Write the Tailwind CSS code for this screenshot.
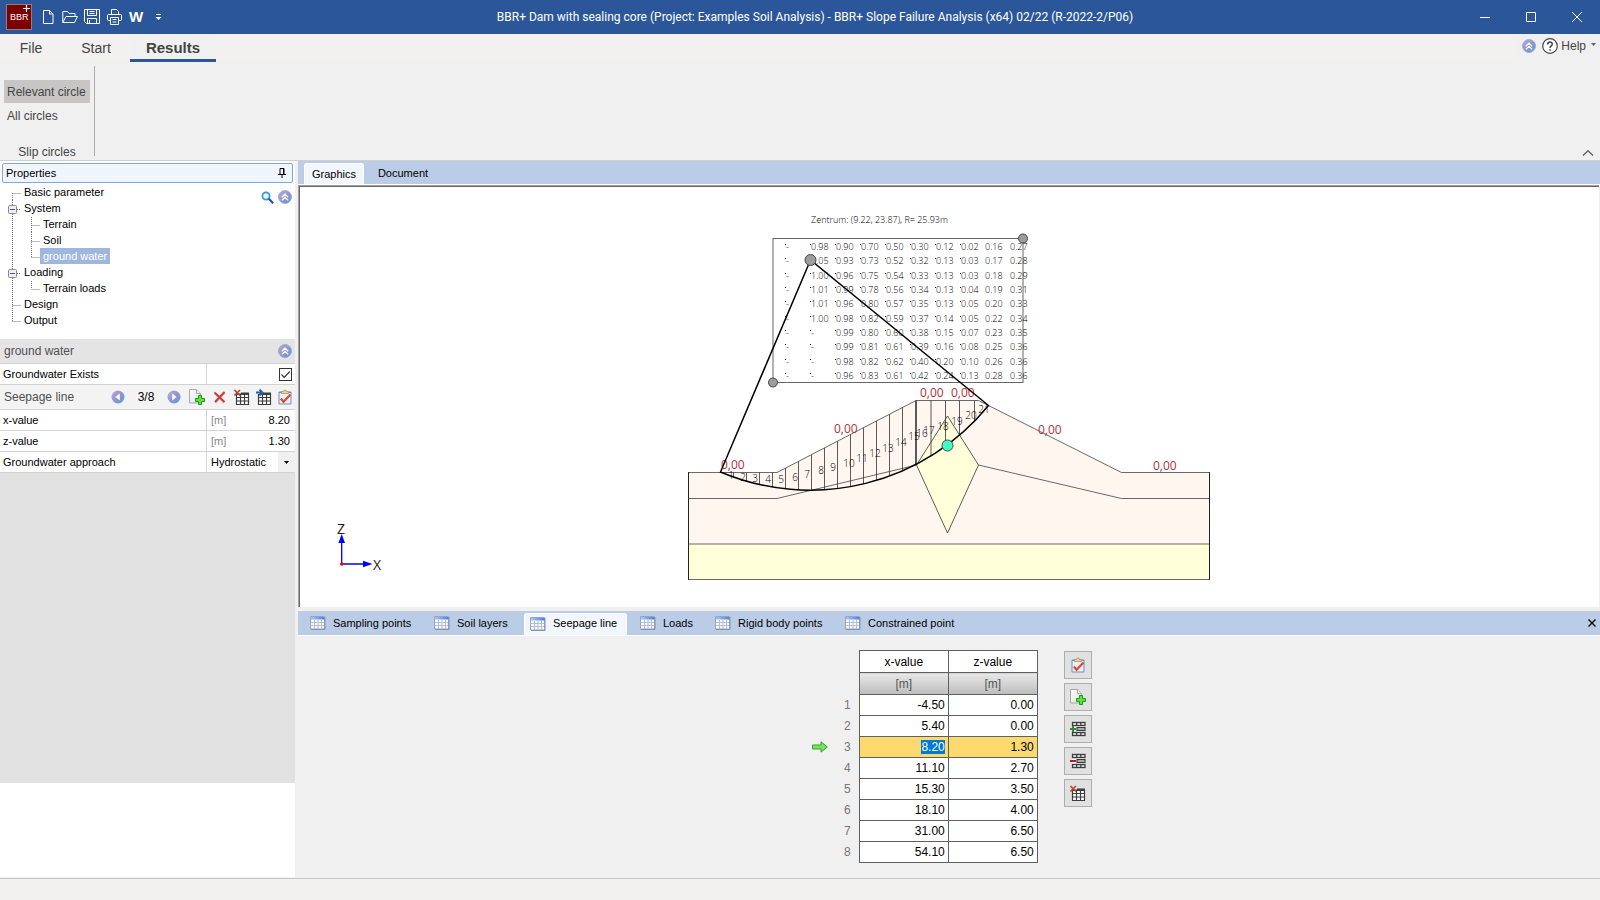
<!DOCTYPE html>
<html lang="en">
<head>
    <meta charset="UTF-8">
    <meta name="viewport" content="width=device-width, initial-scale=1.0">
    <title>BBR+ Slope Failure Analysis</title>
    <script src="https://cdn.jsdelivr.net/npm/@tailwindcss/browser@4"></script>
</head>
<body class="h-screen flex flex-col overflow-hidden bg-[#f0f0f0] font-['Liberation_Sans',sans-serif] text-[11px] text-black">

    <!-- shared icons -->
    <svg class="absolute w-0 h-0">
        <defs>
            <linearGradient id="ball" x1="0" y1="0" x2="1" y2="1">
                <stop offset="0" stop-color="#b7aede"/>
                <stop offset="0.5" stop-color="#9296cf"/>
                <stop offset="1" stop-color="#5a9ad6"/>
            </linearGradient>
            <linearGradient id="tabhead" x1="0" y1="0" x2="1" y2="0">
                <stop offset="0" stop-color="#a9c5fb"/>
                <stop offset="1" stop-color="#4a7ee0"/>
            </linearGradient>
            <linearGradient id="page" x1="0" y1="0" x2="1" y2="1">
                <stop offset="0" stop-color="#ffffff"/>
                <stop offset="1" stop-color="#dcdcdc"/>
            </linearGradient>
        </defs>
        <symbol id="collapse" viewBox="0 0 14 14">
            <circle cx="7" cy="7" r="6.5" fill="url(#ball)" stroke="#8fa6d8" stroke-width="0.8"/>
            <path d="M3.8 7.2 7 4.2l3.2 3M3.8 10.4 7 7.4l3.2 3" fill="none" stroke="#fff" stroke-width="1.3"/>
        </symbol>
        <symbol id="prev" viewBox="0 0 14 14">
            <circle cx="7" cy="7" r="6.5" fill="url(#ball)"/>
            <path d="M8.8 3.4v7.2L4.4 7z" fill="#fff"/>
        </symbol>
        <symbol id="next" viewBox="0 0 14 14">
            <circle cx="7" cy="7" r="6.5" fill="url(#ball)"/>
            <path d="M5.2 3.4v7.2L9.6 7z" fill="#fff"/>
        </symbol>
        <symbol id="newpage" viewBox="0 0 16 16">
            <path d="M.5 .5h7l4 4v9.500H.5z" fill="url(#page)" stroke="#a8a8a8"/>
            <path d="M7.5 .5v4h4" fill="#eee" stroke="#a8a8a8"/>
            <path d="M9.5 6.5h3v3h3v3h-3v3h-3v-3h-3v-3h3z" fill="#5fe03a" stroke="#1a9a1a"/>
        </symbol>
        <symbol id="cross" viewBox="0 0 16 16">
            <path d="M3 4.5 12 14M13 3.500 3.500 14" stroke="#ccc" stroke-width="2"/>
            <path d="M2.500 3.500 12.500 13M12.500 3 3 13" stroke="#cf3b3b" stroke-width="2"/>
        </symbol>
        <symbol id="grid" viewBox="0 0 16 16">
            <path d="M2 4.500h13v11H2z" fill="#fff"/>
            <path d="M2.500 5v10.500h12V5M6.500 5v10.500M10.500 5v10.500M2.500 8.500h12M2.500 12h12" fill="none" stroke="#3d3d3d" stroke-width="1.200"/>
            <path d="M7 3.500h8v2.500H3v-1.500h4z" fill="#3d3d3d"/>
        </symbol>
        <symbol id="delgrid" viewBox="0 0 16 16">
            <use href="#grid"/>
            <path d="M.5 1 6 6.500M6 1 .5 6.500" stroke="#b8432f" stroke-width="1.600"/>
        </symbol>
        <symbol id="insgrid" viewBox="0 0 16 16">
            <use href="#grid"/>
            <path d="M0 3.500h5M3.500 .5 6.500 3.500l-3 3" fill="none" stroke="#1c5fa8" stroke-width="1.800"/>
        </symbol>
        <symbol id="paste" viewBox="0 0 16 16">
            <rect x="1.500" y="2.500" width="13" height="13" rx="1" fill="#6f8fc4"/>
            <path d="M2.500 4h11v10.500h-11z" fill="#e8effa"/>
            <path d="M4.500 4.500V2.500h2a1.500 1.500 0 0 1 3 0h2v2z" fill="#e3d3a0" stroke="#a8935a" stroke-width="0.800"/>
            <path d="M3.800 9.500 6.500 12.800 13.500 5.500" fill="none" stroke="#e0492a" stroke-width="2.200"/>
        </symbol>
        <symbol id="rows" viewBox="0 0 16 16">
            <path d="M2 .5h13.500v15H2z" fill="#fff"/>
            <path d="M2.500 1.500h12.500v3H2.500zM6.700 1.500v3M10.800 1.500v3M2.500 11.500h12.500v3H2.500zM6.700 11.500v3M10.800 11.500v3" fill="none" stroke="#3d3d3d" stroke-width="1.300"/>
            <path d="M7 6.500h8v3H7z" fill="#aaa" stroke="#3d3d3d" stroke-width="1.200"/>
        </symbol>
        <symbol id="addrow" viewBox="0 0 16 16">
            <use href="#rows"/>
            <path d="M0 8h6M3 5v6" stroke="#2f8a3a" stroke-width="2"/>
        </symbol>
        <symbol id="delrow" viewBox="0 0 16 16">
            <use href="#rows"/>
            <path d="M0 8h6" stroke="#c4141e" stroke-width="2"/>
        </symbol>
        <symbol id="sheet" viewBox="0 0 16 14">
            <path d="M.5.5h14v12.500H.5z" fill="#f6f8fc" stroke="#98a5bd"/>
            <path d="M1 3.500V1h13.500v2.500z" fill="url(#tabhead)"/>
            <path d="M1 6.500h13M1 9.500h13M4.500 4v9M8 4v9M11.500 4v9" stroke="#b5bfd2"/>
            <path d="M15 1v12.500H1" fill="none" stroke="#8492ac"/>
        </symbol>
    </svg>

    <!-- title bar -->
    <header class="h-[34px] shrink-0 bg-[#2b579a] text-white flex items-center">
        <div class="flex items-center pl-[6px] flex-1">
            <svg class="w-[26px] h-[26px]" viewBox="0 0 26 26">
                <rect x="0.500" y="0.500" width="25" height="25" fill="#7d0000" stroke="#8f8080"/>
                <text x="4" y="16" font-size="9" fill="#fff">BBR</text>
                <path d="M17 4.500h7M20.500 1v7" stroke="#fff" stroke-width="1.200"/>
            </svg>
            <button class="ml-[10px]" aria-label="New"><svg class="w-3 h-4" viewBox="0 0 12 16"><path d="M1.500 1.500h6l3.500 3.500v9.500H1.500zM7.500 1.500V5H11" fill="none" stroke="#fff"/></svg></button>
            <button class="ml-[8px]" aria-label="Open"><svg class="w-4 h-4" viewBox="0 0 16 16"><path d="M.8 13.500V2.500h4.700l1.500 2h6v3M.8 13.500 4 7.500h11.500l-3 6z" fill="none" stroke="#fff"/></svg></button>
            <button class="ml-[6px]" aria-label="Save"><svg class="w-4 h-4" viewBox="0 0 16 16"><path d="M.5.5h15v14h-13l-2-2zM3.500.5v6h9v-6M3.500 14.500v-5h9v5M5.500 2.500h5M5.500 4.500h5M5.500 11v3" fill="none" stroke="#fff"/></svg></button>
            <button class="ml-[7px]" aria-label="Print"><svg class="w-4 h-4" viewBox="0 0 16 16"><path d="M4.500 5.500v-5h5l2 2v3M3.500 11.500h-2a1 1 0 0 1-1-1v-4a1 1 0 0 1 1-1h12a1 1 0 0 1 1 1v4a1 1 0 0 1-1 1h-2M3.500 8.500h8v7h-8zM5.500 10.500h4M5.500 13h4" fill="none" stroke="#fff"/></svg></button>
            <button class="ml-[6px] w-[14px] font-bold text-[15px] leading-4" aria-label="Word">W</button>
            <button class="ml-[12px]" aria-label="Customize"><svg class="w-[7px] h-2" viewBox="0 0 7 8"><path d="M1 1.500h5" stroke="#fff"/><path d="M.5 4h6l-3 3z" fill="#fff"/></svg></button>
        </div>
        <h1 class="ml-6 font-['Roboto',sans-serif] text-[12px]">BBR+ Dam with sealing core (Project: Examples Soil Analysis) - BBR+ Slope Failure Analysis (x64) 02/22 (R-2022-2/P06)</h1>
        <div class="flex-1 flex justify-end">
            <button class="w-[46px] flex justify-center" aria-label="Minimize"><svg class="w-[10px] h-[10px]" viewBox="0 0 10 10"><path d="M0 5.500h10" stroke="#fff"/></svg></button>
            <button class="w-[46px] flex justify-center" aria-label="Maximize"><svg class="w-[10px] h-[10px]" viewBox="0 0 10 10"><path d="M.5.5h9v9h-9z" fill="none" stroke="#fff"/></svg></button>
            <button class="w-[46px] flex justify-center" aria-label="Close"><svg class="w-[10px] h-[10px]" viewBox="0 0 10 10"><path d="m0 0 10 10M10 0 0 10" stroke="#fff"/></svg></button>
        </div>
    </header>

    <!-- ribbon -->
    <nav class="h-7 shrink-0 bg-[#f3f1ef] flex text-[14px] text-[#444]">
        <button class="w-[62px]">File</button>
        <button class="w-[68px]">Start</button>
        <button class="w-[86px] bg-[#f0f0f0] border-b-3 border-[#2b579a] pt-[3px] font-bold text-[15px] leading-5">Results</button>
        <div class="ml-auto bg-[#f0f0f0] flex items-center gap-[6px] px-1 pb-1 text-[12px]">
            <button aria-label="Collapse"><svg class="w-[14px] h-[14px]"><use href="#collapse"/></svg></button>
            <button class="flex items-center gap-[3px]">
                <svg class="w-4 h-4" viewBox="0 0 16 16"><circle cx="8" cy="8" r="7.300" fill="#fff" stroke="#444" stroke-width="1.200"/><path d="M5.700 6.500C5.700 3.200 10.500 3.400 10.300 6.300 10.200 7.800 8 8 8 10M8 11.200v1.600" fill="none" stroke="#444" stroke-width="1.500"/></svg>
                Help
                <svg class="w-[5px] h-[3px] ml-[2px] mb-[3px]" viewBox="0 0 5 3"><path d="M0 0h5L2.500 3z" fill="#666"/></svg>
            </button>
        </div>
    </nav>
    <div class="h-[99px] shrink-0 border-b border-[#d2d0ce] flex text-[12px] text-[#444]">
        <section class="w-[95px] mt-1 mb-1 border-r border-[#ababab] pt-[14px] flex flex-col">
            <button class="ml-1 w-[86px] h-[23px] bg-[#c8c6c4] pl-[3px] text-left whitespace-nowrap">Relevant circle</button>
            <button class="ml-1 w-[86px] h-[26px] pl-[3px] text-left">All circles</button>
            <p class="mt-auto text-center leading-4 -mb-1">Slip circles</p>
        </section>
        <button class="ml-auto mt-auto mr-[6px] mb-[4px]" aria-label="Hide ribbon"><svg class="w-3 h-[6px]" viewBox="0 0 12 6"><path d="M1 5.500 6 .8l5 4.700" fill="none" stroke="#555" stroke-width="1.200"/></svg></button>
    </div>

    <main class="flex-1 min-h-0 flex">
        <!-- left panel -->
        <aside class="w-[295px] mr-[3px] shrink-0 bg-white flex flex-col">
            <h2 class="m-[2px] mb-0 h-5 shrink-0 bg-[#eff6ff] border border-[#7fa7e0] rounded-xs flex items-center justify-between pl-[3px] pr-[6px]">
                Properties
                <svg class="w-[8px] h-[10px]" viewBox="0 0 8 10"><path d="M2 6V.5h4V6M0 6.500h8M4 6.500V10M5.500.5V6" fill="none" stroke="#000"/></svg>
            </h2>
            <div class="h-[156px] shrink-0 flex items-start justify-between pt-[1px]">
                <ul class="leading-4">
                    <li class="flex"><svg class="w-6 h-4"><path d="M12.500 9v7M12.500 9.500H21" stroke="#777" stroke-dasharray="1 1"/></svg>Basic parameter</li>
                    <li>
                        <div class="flex"><button class="w-6 h-4" aria-label="Toggle System"><svg class="w-6 h-4"><path d="M12.500 0v16M17 9.500h4" stroke="#777" stroke-dasharray="1 1"/><rect x="8.500" y="5.500" width="8" height="8" rx="1" fill="#eee" stroke="#8a8a8a"/><path d="M10 9.500h5" stroke="#3a56a0"/></svg></button>System</div>
                        <ul>
                            <li class="flex"><svg class="w-[43px] h-4"><path d="M12.500 0v16M31.500 1v15M31.500 9.500H40" stroke="#777" stroke-dasharray="1 1"/></svg>Terrain</li>
                            <li class="flex"><svg class="w-[43px] h-4"><path d="M12.500 0v16M31.500 0v16M31.500 9.500H40" stroke="#777" stroke-dasharray="1 1"/></svg>Soil</li>
                            <li class="flex"><svg class="w-10 h-4"><path d="M12.500 0v16M31.500 0v9M31.500 9.500H40" stroke="#777" stroke-dasharray="1 1"/></svg><span class="bg-[#9fb6df] text-white px-[3px]">ground water</span></li>
                        </ul>
                    </li>
                    <li>
                        <div class="flex"><button class="w-6 h-4" aria-label="Toggle Loading"><svg class="w-6 h-4"><path d="M12.500 0v16M17 9.500h4" stroke="#777" stroke-dasharray="1 1"/><rect x="8.500" y="5.500" width="8" height="8" rx="1" fill="#eee" stroke="#8a8a8a"/><path d="M10 9.500h5" stroke="#3a56a0"/></svg></button>Loading</div>
                        <ul>
                            <li class="flex"><svg class="w-[43px] h-4"><path d="M12.500 0v16M31.500 1v8M31.500 9.500H40" stroke="#777" stroke-dasharray="1 1"/></svg>Terrain loads</li>
                        </ul>
                    </li>
                    <li class="flex"><svg class="w-6 h-4"><path d="M12.500 0v16M12.500 9.500H21" stroke="#777" stroke-dasharray="1 1"/></svg>Design</li>
                    <li class="flex"><svg class="w-6 h-4"><path d="M12.500 0v9M12.500 9.500H21" stroke="#777" stroke-dasharray="1 1"/></svg>Output</li>
                </ul>
                <div class="flex gap-1 pt-[6px] pr-[3px]">
                    <button aria-label="Search"><svg class="w-[13px] h-[13px]" viewBox="0 0 13 13"><circle cx="5" cy="5" r="3.600" fill="#e6f6ff" stroke="#3795d0" stroke-width="1.700"/><path d="m7.800 7.800 4.400 4.400" stroke="#234f9e" stroke-width="2.200"/></svg></button>
                    <button aria-label="Collapse all"><svg class="w-[14px] h-[14px]"><use href="#collapse"/></svg></button>
                </div>
            </div>

            <div class="h-[444px] shrink-0 bg-[#e1e1e1]">
                <h3 class="h-[25px] bg-[#e4e4e4] border-b border-[#d2d2d2] flex items-center justify-between pl-1 pr-[3px] text-[12px] text-[#505050]">
                    ground water
                    <button aria-label="Collapse section"><svg class="w-[14px] h-[14px]"><use href="#collapse"/></svg></button>
                </h3>
                <div class="h-[21px] bg-white border-b border-[#d2d2d2] flex">
                    <label for="gw" class="w-[207px] border-r border-[#d2d2d2] pl-[3px] leading-5">Groundwater Exists</label>
                    <div class="ml-auto mr-[3px] self-center grid">
                        <input id="gw" type="checkbox" checked class="appearance-none col-start-1 row-start-1 w-[13px] h-[13px] border border-[#333] bg-white">
                        <svg class="col-start-1 row-start-1 w-[13px] h-[13px] pointer-events-none" viewBox="0 0 13 13"><path d="M2.500 6.500 5.200 9.300 10.800 3.500" fill="none" stroke="#333" stroke-width="1.200"/></svg>
                    </div>
                </div>
                <div class="h-[25px] bg-[#f3f3f3] border-b border-[#d2d2d2] flex items-center pl-1 pr-[2px] text-[12px] text-[#505050]">
                    Seepage line
                    <div class="ml-auto flex items-center">
                        <button aria-label="Previous"><svg class="w-[14px] h-[14px]"><use href="#prev"/></svg></button>
                        <span class="w-[42px] text-center text-black">3/8</span>
                        <button aria-label="Next"><svg class="w-[14px] h-[14px]"><use href="#next"/></svg></button>
                        <button class="ml-2" aria-label="Add"><svg class="w-4 h-4"><use href="#newpage"/></svg></button>
                        <button class="ml-[7px]" aria-label="Delete"><svg class="w-4 h-4"><use href="#cross"/></svg></button>
                        <button class="ml-[6px]" aria-label="Delete all"><svg class="w-4 h-4"><use href="#delgrid"/></svg></button>
                        <button class="ml-[6px]" aria-label="Import table"><svg class="w-4 h-4"><use href="#insgrid"/></svg></button>
                        <button class="ml-[5px]" aria-label="Paste"><svg class="w-4 h-4"><use href="#paste"/></svg></button>
                    </div>
                </div>
                <div class="h-[21px] bg-white border-b border-[#d2d2d2] flex items-center">
                    <label for="xval" class="w-[207px] border-r border-[#d2d2d2] pl-[3px] leading-5">x-value</label>
                    <span class="pl-[4px] text-[#888]">[m]</span>
                    <input id="xval" value="8.20" class="min-w-0 flex-1 text-right pr-[5px] outline-none">
                </div>
                <div class="h-[21px] bg-white border-b border-[#d2d2d2] flex items-center">
                    <label for="zval" class="w-[207px] border-r border-[#d2d2d2] pl-[3px] leading-5">z-value</label>
                    <span class="pl-[4px] text-[#888]">[m]</span>
                    <input id="zval" value="1.30" class="min-w-0 flex-1 text-right pr-[5px] outline-none">
                </div>
                <div class="h-[21px] bg-white border-b border-[#d2d2d2] flex">
                    <label for="approach" class="w-[207px] border-r border-[#d2d2d2] pl-[3px] leading-5">Groundwater approach</label>
                    <div class="flex-1 grid">
                        <select id="approach" class="appearance-none col-start-1 row-start-1 w-full pl-[4px] outline-none">
                            <option>Hydrostatic</option>
                        </select>
                        <span class="col-start-1 row-start-1 justify-self-end w-[17px] bg-[#f0f0f0] flex items-center justify-center pointer-events-none"><svg class="w-[5px] h-[3px]" viewBox="0 0 5 3"><path d="M0 0h5L2.500 3z"/></svg></span>
                    </div>
                </div>
            </div>
        </aside>

        <div class="flex-1 min-w-0 flex flex-col">
            <!-- graphics -->
            <div class="h-6 shrink-0 bg-[#bbcde6] border-b border-white flex pl-[6px] pt-[2px]">
                <button class="w-[60px] bg-[#f2f7fe] rounded-t-[3px] border border-b-0 border-white">Graphics</button>
                <button class="w-[78px]">Document</button>
            </div>
            <div class="h-[422px] shrink-0 mr-[1px] bg-white border-t border-l border-[#a0a0a0]">
                <svg class="w-full h-full border-t border-l border-[#696969]" viewBox="300 187 1299 420" font-family="Open Sans">
                    <!-- soil layers -->
                    <path d="M688.500 472.500H777L916 400.500H978.500L1121.500 472.500H1209.500V544H688.500z" fill="#fff6f0"/>
                    <path d="M688.500 544H1209.500V579.500H688.500z" fill="#ffffd9"/>
                    <path d="M947.500 416 978.500 465 947.500 533 916.500 465z" fill="#ffffd9" stroke="#333" stroke-width="0.800"/>
                    <path d="M688.500 472.500H777L916 400.500H978.500L1121.500 472.500H1209.500M688.500 498.500H777L916.500 465M978.500 465 1121.500 498.500H1209.500M688.500 544H1209.500M688.500 579.500H1209.500" fill="none" stroke="#444" stroke-width="0.800"/>
                    <path d="M688.500 472V580M1209.500 472V580" stroke="#222"/>
                    <g id="slices" stroke="#333" stroke-width="0.800"></g>
                    <g id="slice-labels" font-size="10" font-weight="300" text-anchor="middle"></g>
                    <g font-size="12" fill="#b0303a">
                        <text x="721" y="469">0,00</text>
                        <text x="834" y="433">0,00</text>
                        <text x="920" y="397">0,00</text>
                        <text x="951" y="397">0,00</text>
                        <text x="1038" y="434">0,00</text>
                        <text x="1153" y="470">0,00</text>
                    </g>
                    <!-- centre grid -->
                    <rect x="773" y="238.500" width="250" height="144" fill="none" stroke="#666"/>
                    <g id="grid-values" font-size="9" font-weight="300"></g>
                    <text x="811" y="223" font-size="9" font-weight="300">Zentrum: (9.22, 23.87), R= 25.93m</text>
                    <path d="M810.500 260 720.500 472A230.200 230.200 0 0 0 988.500 405.500z" fill="none" stroke="#000" stroke-width="1.500"/>
                    <g fill="#9c9c9c" stroke="#444">
                        <circle cx="773" cy="382.500" r="4.500"/>
                        <circle cx="1023" cy="238.500" r="4.500"/>
                        <circle cx="810.500" cy="260" r="5.500"/>
                        <circle cx="947.500" cy="445.500" r="5.500" fill="#40ffc8"/>
                    </g>
                    <!-- axes -->
                    <path d="M341.700 564V543M341.700 564H364" stroke="#00f" stroke-width="1.300"/>
                    <path d="M341.700 534 345 543H338.400zM372.500 564 363 567.200V560.800z" fill="#00f"/>
                    <circle cx="341.700" cy="564" r="1.800" fill="#f00"/>
                    <g font-size="14" fill="#222">
                        <text x="337" y="534">Z</text>
                        <text x="373" y="570">X</text>
                    </g>
                </svg>
            </div>

            <!-- data tabs -->
            <div class="h-[25px] shrink-0 mt-1 bg-[#bbcde6] border-b border-white flex pl-[6px]">
                <button class="flex items-center gap-[7px] px-[6px] w-[124px] whitespace-nowrap"><svg class="w-4 h-[14px]"><use href="#sheet"/></svg>Sampling points</button>
                <button class="flex items-center gap-[7px] px-[6px] w-[96px] whitespace-nowrap"><svg class="w-4 h-[14px]"><use href="#sheet"/></svg>Soil layers</button>
                <button class="flex items-center gap-[7px] px-[5px] mt-[2px] pb-[2px] w-[103px] bg-[#f2f7fe] rounded-t-[3px] border border-b-0 border-white whitespace-nowrap"><svg class="w-4 h-[14px]"><use href="#sheet"/></svg>Seepage line</button>
                <button class="flex items-center gap-[7px] pl-[13px] w-[82px] whitespace-nowrap"><svg class="w-4 h-[14px]"><use href="#sheet"/></svg>Loads</button>
                <button class="flex items-center gap-[7px] px-[6px] w-[130px] whitespace-nowrap"><svg class="w-4 h-[14px]"><use href="#sheet"/></svg>Rigid body points</button>
                <button class="flex items-center gap-[7px] px-[6px] whitespace-nowrap"><svg class="w-4 h-[14px]"><use href="#sheet"/></svg>Constrained point</button>
                <button class="ml-auto mr-1" aria-label="Close panel"><svg class="w-2 h-2" viewBox="0 0 8 8"><path d="m.5.5 7 7M7.500.5l-7 7" stroke="#000" stroke-width="1.400"/></svg></button>
            </div>
            <div class="flex-1 flex justify-center items-start gap-[26px] pt-[14px]">
                <table class="border-collapse text-[12px]">
                    <thead>
                        <tr class="h-[22px]">
                            <td class="w-[53px]"></td>
                            <th class="w-[89px] bg-white border border-[#606060] font-normal">x-value</th>
                            <th class="w-[89px] bg-white border border-[#606060] font-normal">z-value</th>
                        </tr>
                        <tr class="h-[22px] text-[#555]">
                            <td></td>
                            <td class="border border-[#606060] bg-linear-to-b from-[#e8e8e8] to-[#bdbdbd] text-center">[m]</td>
                            <td class="border border-[#606060] bg-linear-to-b from-[#e8e8e8] to-[#bdbdbd] text-center">[m]</td>
                        </tr>
                    </thead>
                    <tbody id="points"></tbody>
                </table>
                <div class="flex flex-col gap-1 pt-px">
                    <button class="w-7 h-7 border border-[#adadad] bg-[#e1e1e1] flex items-center justify-center" aria-label="Paste"><svg class="w-4 h-4"><use href="#paste"/></svg></button>
                    <button class="w-7 h-7 border border-[#adadad] bg-[#e1e1e1] flex items-center justify-center" aria-label="Add"><svg class="w-4 h-4"><use href="#newpage"/></svg></button>
                    <button class="w-7 h-7 border border-[#adadad] bg-[#e1e1e1] flex items-center justify-center" aria-label="Insert row"><svg class="w-4 h-4"><use href="#addrow"/></svg></button>
                    <button class="w-7 h-7 border border-[#adadad] bg-[#e1e1e1] flex items-center justify-center" aria-label="Remove row"><svg class="w-4 h-4"><use href="#delrow"/></svg></button>
                    <button class="w-7 h-7 border border-[#adadad] bg-[#e1e1e1] flex items-center justify-center" aria-label="Delete all"><svg class="w-4 h-4"><use href="#delgrid"/></svg></button>
                </div>
            </div>
        </div>
    </main>

    <footer class="h-[22px] shrink-0 mt-px bg-[#f3f1ef] border-t border-[#c8c6c4]"></footer>

    <script>
        const points = [
            ['-4.50', '0.00'], ['5.40', '0.00'], ['8.20', '1.30'], ['11.10', '2.70'],
            ['15.30', '3.50'], ['18.10', '4.00'], ['31.00', '6.50'], ['54.10', '6.50']
        ];
        const arrow = `<svg class="w-4 h-3" viewBox="0 0 16 12"><path d="M.5 4h8.500V.8L15.300 6 9 11.200V8H.5z" fill="#7be060" stroke="#2fa52a"/></svg>`;
        let html = '';
        points.forEach(([x, z], i) => {
            const active = i === 2;
            html += `
                <tr class="h-[21px] ${active ? 'bg-[#fbd96e]' : 'bg-white'} text-right">
                    <th class="bg-[#f0f0f0] font-normal text-[#777] pl-[6px] pr-2"><div class="flex items-center justify-between">${active ? arrow : '<span></span>'}${i + 1}</div></th>
                    <td class="border border-[#606060] pr-[3px]">${active ? `<span class="bg-[#0078d7] text-white">${x}</span>` : x}</td>
                    <td class="border border-[#606060] pr-[3px]">${z}</td>
                </tr>
            `;
        });
        document.getElementById('points').innerHTML = html;

        // values for each trial centre
        const values = [
            '- 0.98 0.90 0.70 0.50 0.30 0.12 0.02 0.16 0.27',
            '- 1.05 0.93 0.73 0.52 0.32 0.13 0.03 0.17 0.28',
            '- 1.00 0.96 0.75 0.54 0.33 0.13 0.03 0.18 0.29',
            '- 1.01 0.99 0.78 0.56 0.34 0.13 0.04 0.19 0.31',
            '- 1.01 0.96 0.80 0.57 0.35 0.13 0.05 0.20 0.33',
            '- 1.00 0.98 0.82 0.59 0.37 0.14 0.05 0.22 0.34',
            '- - 0.99 0.80 0.60 0.38 0.15 0.07 0.23 0.35',
            '- - 0.99 0.81 0.61 0.39 0.16 0.08 0.25 0.36',
            '- - 0.98 0.82 0.62 0.40 0.20 0.10 0.26 0.36',
            '- - 0.96 0.83 0.61 0.42 0.24 0.13 0.28 0.36'
        ];
        let grid = '';
        values.forEach((row, r) => {
            const y = Math.round(250 + r * 14.35);
            row.split(' ').forEach((v, c) => {
                const x = 785 + c * 25;
                grid += `<text x="${c < 8 ? x + 1 : x}" y="${y}">${v}</text>`;
                if (c < 8) grid += `<rect x="${x}" y="${y - 6}" width="1" height="1"/>`;
            });
        });
        document.getElementById('grid-values').innerHTML = grid;

        // slices run from the terrain down to the slip circle
        const xs = [733.5, 746.5, 759.5, 772.5, 785.5, 798.5, 811.5, 824.5, 837.5, 850.5, 863.5, 876.5, 889.5, 902.5, 915.5, 916.5, 931, 945.5, 959.5, 974.5];
        document.getElementById('slices').innerHTML = xs.map(x => {
            const top = x < 777 ? 472.5 : x < 916 ? 472.5 - (x - 777) * 72 / 139 : 400.5;
            const bottom = 260 + Math.sqrt(230.2 ** 2 - (x - 810.5) ** 2);
            return `<path d="M${x} ${top}V${bottom}"/>`;
        }).join('');
        const labels = [[731, 479], [743, 481], [755, 482], [768, 483], [781, 483], [795, 481], [807, 478], [821, 474], [833, 471], [849, 467], [862, 462], [875, 457], [888, 452], [901, 446], [914, 440], [922, 437], [929, 434], [943, 430], [957, 425], [971, 419], [984, 413]];
        document.getElementById('slice-labels').innerHTML = labels.map(([x, y], i) => `<text x="${x}" y="${y}">${i + 1}</text>`).join('');
    </script>
</body>
</html>
